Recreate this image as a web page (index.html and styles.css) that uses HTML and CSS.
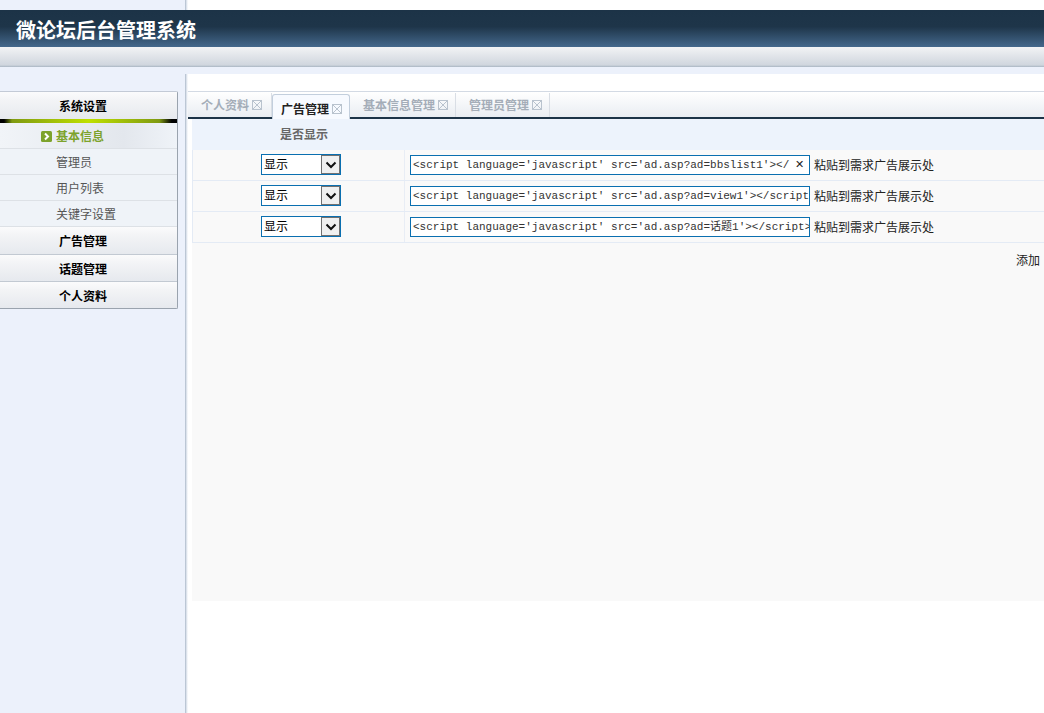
FILE: index.html
```html
<!DOCTYPE html>
<html lang="zh-CN">
<head>
  <meta charset="UTF-8">
  <title>微论坛后台管理系统</title>
  <link rel="stylesheet" href="styles.css">
</head>
<body>
  <div class="top-strip"><div class="top-left"></div><div class="divider"></div></div>
  <header class="banner">微论坛后台管理系统</header>
  <div class="subbar"></div>
  <div class="gap"></div>
  <div class="main">
    <aside class="sidebar">
      <div class="menu">
        <div class="menu-head">系统设置</div>
        <div class="menu-rule"></div>
        <div class="menu-item active">
          <svg class="arrow" width="11" height="11" viewBox="0 0 11 11"><rect width="11" height="11" rx="1.5" fill="#7da32c"/><path d="M4 2.5 7 5.5 4 8.5" fill="none" stroke="#fff" stroke-width="2"/></svg>基本信息
        </div>
        <div class="menu-item">管理员</div>
        <div class="menu-item">用户列表</div>
        <div class="menu-item">关键字设置</div>
        <div class="menu-head">广告管理</div>
        <div class="menu-head">话题管理</div>
        <div class="menu-head">个人资料</div>
      </div>
    </aside>
    <div class="divider"></div>
    <section class="content">
      <div class="tabs">
        <div class="tab">个人资料<span class="tab-x"></span></div>
        <div class="tab current">广告管理<span class="tab-x"></span></div>
        <div class="tab">基本信息管理<span class="tab-x"></span></div>
        <div class="tab">管理员管理<span class="tab-x"></span></div>
      </div>
      <div class="panel">
        <div class="table-head">是否显示</div>
        <div class="rows">
          <div class="row">
            <div class="cell-show"><div class="select"><span>显示</span><i class="select-btn"><svg width="12" height="8" viewBox="0 0 12 8"><path d="M1.5 1.5 6 6 10.5 1.5" fill="none" stroke="#111" stroke-width="2"/></svg></i></div></div>
            <div class="cell-code"><div class="code caret"><span class="code-text">&lt;script language='javascript' src='ad.asp?ad=bbslist1'&gt;&lt;/</span><span class="clear">✕</span></div><span class="hint">粘贴到需求广告展示处</span></div>
          </div>
          <div class="row">
            <div class="cell-show"><div class="select"><span>显示</span><i class="select-btn"><svg width="12" height="8" viewBox="0 0 12 8"><path d="M1.5 1.5 6 6 10.5 1.5" fill="none" stroke="#111" stroke-width="2"/></svg></i></div></div>
            <div class="cell-code"><div class="code"><span class="code-text">&lt;script language='javascript' src='ad.asp?ad=view1'&gt;&lt;/script&gt;</span></div><span class="hint">粘贴到需求广告展示处</span></div>
          </div>
          <div class="row">
            <div class="cell-show"><div class="select"><span>显示</span><i class="select-btn"><svg width="12" height="8" viewBox="0 0 12 8"><path d="M1.5 1.5 6 6 10.5 1.5" fill="none" stroke="#111" stroke-width="2"/></svg></i></div></div>
            <div class="cell-code"><div class="code"><span class="code-text">&lt;script language='javascript' src='ad.asp?ad=话题1'&gt;&lt;/script&gt;</span></div><span class="hint">粘贴到需求广告展示处</span></div>
          </div>
        </div>
        <div class="add-row">添加</div>
      </div>
    </section>
  </div>
</body>
</html>
```

FILE: styles.css
```css
* {
  box-sizing: border-box;
  margin: 0;
  padding: 0;
}
html, body {
  height: 713px;
  overflow: hidden;
}
body {
  font-family: "Noto Sans CJK SC", "Liberation Sans", sans-serif;
  font-size: 12px;
  background-color: #fff;
  color: #000;
  display: flex;
  flex-direction: column;
}
.top-strip {
  height: 10px;
  display: flex;
}
.top-left {
  width: 185px;
  background-color: #ecf1fb;
}
.divider {
  width: 3px;
  flex-shrink: 0;
  background: linear-gradient(to right, #a9b6c6, #d5dde8 40%, #fff);
}
.banner {
  height: 37px;
  padding-left: 16px;
  line-height: 40px;
  font-size: 20px;
  font-weight: bold;
  color: #fff;
  background: linear-gradient(to bottom, #1c3347 0%, #1e3549 45%, #44688c 100%);
}
.subbar {
  height: 20px;
  background: linear-gradient(to bottom, #f2f3f5, #d0d6de 90%, #a9b5c3);
}
.gap {
  height: 7px;
  background-color: #ecf1fb;
}
.main {
  flex: 1;
  display: flex;
  min-height: 0;
}
.sidebar {
  width: 185px;
  background-color: #ecf1fb;
  padding-top: 17px;
}
.menu {
  width: 178px;
  border: 1px solid #c3cad6;
  border-left: none;
  border-right-color: #9aa3ae;
  border-bottom-color: #9aa3ae;
  border-radius: 0 2px 2px 0;
  background-color: #eff3f8;
}
.menu-head {
  height: 27px;
  line-height: 27px;
  padding-left: 59px;
  font-weight: bold;
  color: #000;
  background: linear-gradient(to bottom, #fbfbfc, #f3f4f6 30%, #e6e9ee);
}
.menu-head + .menu-head {
  border-top: 1px solid #c2c9d2;
}
.menu-rule {
  height: 4px;
  background: linear-gradient(to right, #000 4px, #7f9a12 12px, #bfe000 50%, #7f9a12 90%, #000 97%);
}
.menu-item {
  height: 26px;
  line-height: 25px;
  padding-left: 56px;
  color: #555;
  border-bottom: 1px solid #dde1e6;
  position: relative;
}
.menu-item.active {
  font-weight: bold;
  color: #7da32c;
  background: linear-gradient(to right, #f1f4f8, #e3e7ed 70%, #eff3f8);
}
.arrow {
  position: absolute;
  left: 41px;
  top: 8px;
}
.content {
  flex: 1;
  min-width: 0;
  padding-top: 17px;
  background-color: #fff;
  display: flex;
  flex-direction: column;
}
.tabs {
  height: 28px;
  display: flex;
  align-items: flex-end;
  border-top: 1px solid #d3dae4;
  border-bottom: 2px solid #1c3347;
  background: linear-gradient(to bottom, #fff, #e9edf2);
  padding-left: 0;
}
.tab {
  height: 24px;
  line-height: 23px;
  padding: 0 7px 0 13px;
  font-weight: bold;
  color: #a4adb8;
  border-right: 1px solid #d9dee5;
  display: flex;
  align-items: flex-start;
  white-space: nowrap;
}
.tab:first-child {
  padding-right: 9px;
}
.tab.current {
  height: 25px;
  margin-bottom: -2px;
  line-height: 27px;
  padding: 0 7px 0 8px;
  color: #222;
  background-color: #f7faff;
  border: 1px solid #c3cfdd;
  border-bottom: none;
  border-radius: 3px 3px 0 0;
}
.tab-x {
  width: 10px;
  height: 10px;
  margin: 7px 0 0 3px;
  border: 1px solid #b9c3ce;
  background:
    linear-gradient(45deg, transparent 44%, #b9c3ce 44%, #b9c3ce 56%, transparent 56%),
    linear-gradient(-45deg, transparent 44%, #b9c3ce 44%, #b9c3ce 56%, transparent 56%);
}
.current .tab-x {
  margin-top: 9px;
}
.panel {
  margin-left: 4px;
  height: 482px;
  background-color: #f9f9f9;
}
.table-head {
  height: 31px;
  line-height: 29px;
  padding-left: 88px;
  font-weight: bold;
  color: #666;
  background-color: #edf3fc;
}
.rows {
  border-left: 1px solid #e4ebf5;
}
.row {
  height: 31px;
  display: flex;
  border-bottom: 1px solid #e4ebf5;
}
.cell-show {
  width: 212px;
  flex-shrink: 0;
  padding: 4px 0 0 68px;
  border-right: 1px solid #e8edf5;
}
.select {
  width: 80px;
  height: 21px;
  display: flex;
  justify-content: space-between;
  border: 1px solid #0a6fb0;
  background-color: #fff;
  font-size: 12px;
  line-height: 18px;
  padding-left: 2px;
}
.select-btn {
  width: 19px;
  height: 19px;
  display: flex;
  align-items: center;
  justify-content: center;
  background-color: #f0f0f0;
  border: 1px solid #707070;
}
.cell-code {
  flex: 1;
  display: flex;
  padding: 5px 0 0 5px;
  min-width: 0;
}
.code {
  width: 400px;
  height: 20px;
  flex-shrink: 0;
  border: 1px solid #0a6fb0;
  background-color: #fff;
  font-family: "Liberation Mono", "Noto Sans CJK SC", monospace;
  font-size: 11px;
  line-height: 18px;
  padding-left: 2px;
  overflow: hidden;
  white-space: nowrap;
  position: relative;
  color: #333;
}
.code.caret {
  border-left-width: 1px;
}
.clear {
  position: absolute;
  right: 0;
  top: 0;
  width: 19px;
  height: 18px;
  text-align: center;
  background-color: #fff;
  font-family: "DejaVu Sans", sans-serif;
  font-size: 11px;
  font-weight: bold;
  color: #222;
}
.hint {
  margin-left: 4px;
  line-height: 19px;
  color: #222;
  white-space: nowrap;
}
.add-row {
  padding: 8px 4px 0 0;
  text-align: right;
  color: #222;
}
```
